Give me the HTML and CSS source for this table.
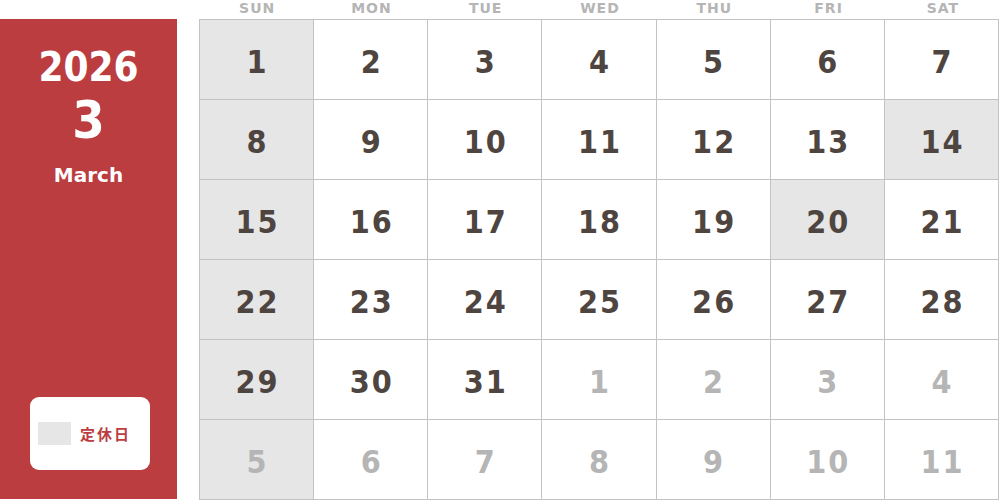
FILE: index.html
```html
<!DOCTYPE html>
<html lang="ja">
<head>
<meta charset="utf-8">
<link rel="stylesheet" href="styles.css">
</head>
<body>
<div class="wrap">
  <aside class="side">
    <div class="year">2026</div>
    <div class="month-num">3</div>
    <div class="month-name">March</div>
    <div class="legend">
      <span class="swatch"></span>
      <span class="legend-text">定休日</span>
    </div>
  </aside>
  <main class="cal">
    <div class="head">
      <div>SUN</div><div>MON</div><div>TUE</div><div>WED</div><div>THU</div><div>FRI</div><div>SAT</div>
    </div>
    <div class="grid">
      <div class="c off">1</div><div class="c">2</div><div class="c">3</div><div class="c">4</div><div class="c">5</div><div class="c">6</div><div class="c">7</div>
      <div class="c off">8</div><div class="c">9</div><div class="c">10</div><div class="c">11</div><div class="c">12</div><div class="c">13</div><div class="c off">14</div>
      <div class="c off">15</div><div class="c">16</div><div class="c">17</div><div class="c">18</div><div class="c">19</div><div class="c off">20</div><div class="c">21</div>
      <div class="c off">22</div><div class="c">23</div><div class="c">24</div><div class="c">25</div><div class="c">26</div><div class="c">27</div><div class="c">28</div>
      <div class="c off">29</div><div class="c">30</div><div class="c">31</div><div class="c next">1</div><div class="c next">2</div><div class="c next">3</div><div class="c next">4</div>
      <div class="c off next">5</div><div class="c next">6</div><div class="c next">7</div><div class="c next">8</div><div class="c next">9</div><div class="c next">10</div><div class="c next">11</div>
    </div>
  </main>
</div>
</body>
</html>
```
FILE: styles.css
```css
html, body {
  margin: 0;
  padding: 0;
  background: #ffffff;
}
body {
  font-family: "DejaVu Sans", "Noto Sans CJK JP", sans-serif;
  font-weight: bold;
  width: 1000px;
  height: 500px;
  overflow: hidden;
}
.wrap {
  display: flex;
  gap: 22px;
}
.side {
  width: 177px;
  height: 480px;
  margin-top: 19px;
  background: #bb3d3f;
  color: #ffffff;
  display: flex;
  flex-direction: column;
  align-items: center;
  box-sizing: border-box;
  padding-top: 28px;
  padding-bottom: 29px;
}
.year {
  font-size: 40px;
  line-height: 1;
  font-stretch: condensed;
}
.month-num {
  font-size: 52px;
  line-height: 1;
  margin-top: 7px;
  font-stretch: condensed;
}
.month-name {
  font-size: 20px;
  line-height: 1;
  margin-top: 19px;
}
.legend {
  margin-top: auto;
  align-self: flex-start;
  margin-left: 30px;
  width: 120px;
  height: 73px;
  background: #ffffff;
  border-radius: 9px;
  display: flex;
  align-items: center;
  padding-left: 8px;
  box-sizing: border-box;
  gap: 9px;
}
.swatch {
  width: 33px;
  height: 23px;
  background: #e6e6e6;
}
.legend-text {
  color: #bb3d3f;
  font-size: 15px;
  font-family: "Noto Sans CJK JP", sans-serif;
  font-weight: bold;
  letter-spacing: 2px;
}
.cal {
  width: 801px;
}
.head {
  display: grid;
  grid-template-columns: repeat(7, 1fr);
  height: 19px;
  padding-left: 1px;
}
.head div {
  text-align: center;
  color: #b5b5b5;
  font-size: 14px;
  line-height: 14px;
  padding-top: 1px;
  letter-spacing: 1px;
}
.grid {
  display: grid;
  grid-template-columns: repeat(7, 1fr);
  grid-auto-rows: 80px;
  border-left: 1px solid #c3c3c3;
  border-top: 1px solid #c3c3c3;
  width: 800px;
  box-sizing: border-box;
}
.c {
  border-right: 1px solid #c3c3c3;
  border-bottom: 1px solid #c3c3c3;
  display: flex;
  align-items: center;
  justify-content: center;
  font-size: 32px;
  font-stretch: condensed;
  letter-spacing: 2px;
  padding-left: 2px;
  color: #4f4540;
  padding-top: 4px;
  box-sizing: border-box;
}
.c.off {
  background: #e6e6e6;
}
.c.next {
  color: #b5b5b5;
}
```
